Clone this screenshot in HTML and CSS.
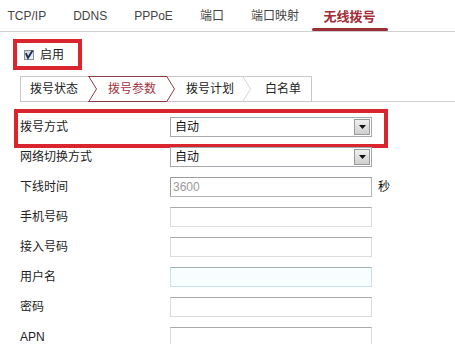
FILE: index.html
```html
<!DOCTYPE html>
<html lang="zh-CN">
<head>
<meta charset="utf-8">
<title>无线拨号</title>
<link rel="stylesheet" href="styles.css">
</head>
<body>
<div class="page">
  <nav class="tabs">
    <span class="tab">TCP/IP</span>
    <span class="tab">DDNS</span>
    <span class="tab">PPPoE</span>
    <span class="tab">端口</span>
    <span class="tab">端口映射</span>
    <span class="tab active">无线拨号</span>
  </nav>

  <div class="enable">
    <svg class="cb" width="10" height="10" viewBox="0 0 10 10">
      <defs>
        <linearGradient id="cbg" x1="0" y1="0" x2="1" y2="1">
          <stop offset="0" stop-color="#c9ccd2"/>
          <stop offset="1" stop-color="#f4f4f4"/>
        </linearGradient>
      </defs>
      <rect x="0.5" y="0.5" width="9" height="9" fill="url(#cbg)" stroke="#8a9099"/>
      <path d="M1.8 3.2 L4 7.8 L8.6 0.6" fill="none" stroke="#1d2a55" stroke-width="1.8"/>
    </svg>
    <span class="enable-text">启用</span>
  </div>

  <div class="subbar">
    <div class="subtabs">
      <span class="st first">拨号状态</span>
      <span class="sep"><svg width="9" height="26" viewBox="0 0 9 26"><path d="M0 0.5 H9 M0 25.5 H9" stroke="#8f3a40" fill="none"/><path d="M0.5 0 L8.5 13 L0.5 26" stroke="#8f3a40" fill="none"/></svg></span>
      <span class="st active">拨号参数</span>
      <span class="sep"><svg width="9" height="26" viewBox="0 0 9 26"><path d="M0 0.5 H9 M0 25.5 H9" stroke="#c8c8c8" fill="none"/><path d="M0 0.5 H0.5 M0 25.5 H0.5" stroke="#8f3a40" fill="none"/><path d="M0.5 0 L8.5 13 L0.5 26" stroke="#8f3a40" fill="none"/></svg></span>
      <span class="st third">拨号计划</span>
      <span class="sep"><svg width="9" height="26" viewBox="0 0 9 26"><path d="M0 0.5 H9 M0 25.5 H9" stroke="#c8c8c8" fill="none"/><path d="M0.5 0 L8.5 13 L0.5 26" stroke="#d4d4d4" fill="none"/></svg></span>
      <span class="st last">白名单</span>
    </div>
  </div>

  <div class="form">
    <div class="row marked">
      <span class="label">拨号方式</span>
      <div class="select"><span class="select-text">自动</span><span class="arrow"><svg width="7" height="4" viewBox="0 0 7 4"><path d="M0 0 H7 L3.5 4 Z" fill="#111"/></svg></span></div>
    </div>
    <div class="row">
      <span class="label">网络切换方式</span>
      <div class="select"><span class="select-text">自动</span><span class="arrow"><svg width="7" height="4" viewBox="0 0 7 4"><path d="M0 0 H7 L3.5 4 Z" fill="#111"/></svg></span></div>
    </div>
    <div class="row">
      <span class="label">下线时间</span>
      <input class="field disabled" type="text" value="3600" disabled>
      <span class="unit">秒</span>
    </div>
    <div class="row">
      <span class="label">手机号码</span>
      <input class="field" type="text" value="">
    </div>
    <div class="row">
      <span class="label">接入号码</span>
      <input class="field" type="text" value="">
    </div>
    <div class="row">
      <span class="label">用户名</span>
      <input class="field focus" type="text" value="">
    </div>
    <div class="row">
      <span class="label">密码</span>
      <input class="field" type="password" value="">
    </div>
    <div class="row">
      <span class="label">APN</span>
      <input class="field" type="text" value="">
    </div>
  </div>
</div>
</body>
</html>
```

FILE: styles.css
```css
* { box-sizing: border-box; }
html, body { margin: 0; padding: 0; background: #fff; }
body {
  font-family: "Liberation Sans", "Noto Sans CJK SC", sans-serif;
  font-size: 12px;
  color: #222;
  overflow: hidden;
}
.page { width: 455px; height: 344px; overflow: hidden; }

/* top tabs */
.tabs {
  display: flex;
  height: 32px;
  border-bottom: 1px solid #cfcfcf;
  margin-left: -6px;
}
.tab {
  position: relative;
  padding: 0 13.5px;
  line-height: 33px;
  height: 31px;
  font-size: 12px;
  color: #444;
  white-space: nowrap;
}
.tab.active {
  color: #a32d36;
  font-weight: bold;
  font-size: 13px;
  padding: 0 13px 0 11px;
}
.tab.active::after {
  content: "";
  position: absolute;
  left: 0;
  right: 0;
  bottom: 0;
  height: 3px;
  border-radius: 2px;
  background: #9b2f38;
}

/* enable frame */
.enable {
  display: flex;
  align-items: center;
  width: 69px;
  height: 31px;
  margin: 7px 0 0 13px;
  border: 4px solid #d9262e;
  padding-left: 7px;
}
.cb { display: block; flex: none; }
.enable-text { margin-left: 6px; line-height: 14px; }

/* sub tabs */
.subbar {
  margin: 6px 0 0 20px;
  border-bottom: 1px solid #d0d0d0;
  height: 26px;
}
.subtabs {
  display: inline-flex;
  height: 26px;
  border-left: 1px solid #c8c8c8;
  border-right: 1px solid #c8c8c8;
}
.st {
  height: 26px;
  line-height: 24px;
  border-top: 1px solid #c8c8c8;
  border-bottom: 1px solid #c8c8c8;
  padding: 0 10px 0 11px;
  color: #222;
  white-space: nowrap;
}
.st.first { padding-left: 9px; }
.st.third { padding-right: 8px; }
.st.last { padding-left: 14px; padding-right: 10px; }
.st.active {
  color: #a3343c;
  border-top-color: #8f3a40;
  border-bottom-color: #8f3a40;
}
.sep { display: block; width: 9px; height: 26px; flex: none; }
.sep svg { display: block; }

/* form */
.form { margin-top: 10px; padding-left: 20px; }
.row {
  position: relative;
  display: flex;
  align-items: center;
  height: 30px;
}
.row.marked::after {
  content: "";
  position: absolute;
  left: -6px;
  top: -3px;
  width: 366px;
  height: 31px;
  border: 4px solid #d9262e;
  pointer-events: none;
}
.label { width: 150px; flex: none; line-height: 14px; color: #222; }

.select {
  width: 202px;
  height: 20px;
  border: 1px solid #a5a9ae;
  display: flex;
  align-items: center;
  justify-content: space-between;
  padding: 0 1px 0 4px;
  background: #fff;
}
.select-text { line-height: 14px; color: #111; }
.arrow {
  width: 16px;
  height: 16px;
  border: 1px solid #9a9a9a;
  background: linear-gradient(#f0f0f0, #cfcfcf);
  display: flex;
  align-items: center;
  justify-content: center;
}
.arrow svg { display: block; }

.field {
  width: 202px;
  height: 20px;
  margin: 0;
  padding: 0 2px;
  font: inherit;
  font-size: 12px;
  border: 1px solid #dcdcdc;
  border-top-color: #a8a8a8;
  background: #fff;
  outline: none;
}
.field.disabled {
  color: #9a9a9a;
  border-color: #b5b5b5;
  border-left-color: #9c9c9c;
  border-top-color: #9c9c9c;
  background: #fff;
}
.field.focus {
  border-color: #c7e2ea;
  border-top-color: #9fb1b8;
  background: #f8fdff;
}
.unit { margin-left: 6px; line-height: 14px; color: #111; }
```
